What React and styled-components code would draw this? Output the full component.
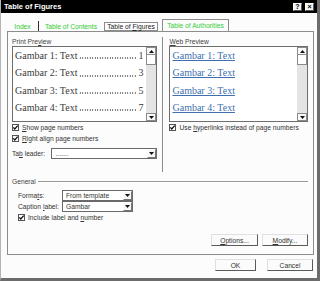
import React from "react";
import styled, { createGlobalStyle } from "styled-components";

const GlobalStyle = createGlobalStyle`
  html, body { margin: 0; padding: 0; background: #ffffff; }
  * { box-sizing: border-box; }
  body {
    font-family: "Liberation Sans", Arial, sans-serif;
    font-size: 6.7px;
    color: #333333;
  }
`;

const rows = [
  { label: "Gambar 1: Text", page: 1 },
  { label: "Gambar 2: Text", page: 3 },
  { label: "Gambar 3: Text", page: 5 },
  { label: "Gambar 4: Text", page: 7 },
];

const Arrow = ({ down }) => (
  <svg width="5" height="3" viewBox="0 0 5 3">
    <path d={down ? "M0 0 H5 L2.5 3 Z" : "M0 3 H5 L2.5 0 Z"} fill="#111" />
  </svg>
);

const Check = ({ label }) => (
  <CheckRow>
    <CheckBox>
      <svg width="7" height="7" viewBox="0 0 7 7">
        <path d="M1.3 3.4 L2.8 5 L5.7 1.6" stroke="#111" strokeWidth="1.3" fill="none" />
      </svg>
    </CheckBox>
    <span>{label}</span>
  </CheckRow>
);

const Select = ({ value, width }) => (
  <SelectBox $width={width}>
    <SelectValue>{value}</SelectValue>
    <SelectBtn>
      <Arrow down />
    </SelectBtn>
  </SelectBox>
);

const ScrollBar = () => (
  <Scroll>
    <ScrollBtn>
      <Arrow />
    </ScrollBtn>
    <Thumb />
    <Track />
    <ScrollBtn>
      <Arrow down />
    </ScrollBtn>
  </Scroll>
);

const App = () => {
  return (
    <>
      <GlobalStyle />
      <Window>
        <TitleBar>
          <Title>Table of Figures</Title>
          <TitleButtons>
            <TitleBtn>?</TitleBtn>
            <TitleBtn>×</TitleBtn>
          </TitleButtons>
        </TitleBar>
        <Body>
          <Tabs>
            <Tab $width={32} $sep>Index</Tab>
            <Tab $width={64}>Table of Contents</Tab>
            <ActiveTab>
              <span>
                Table of <U>F</U>igures
              </span>
            </ActiveTab>
            <BoxTab>Table of Authorities</BoxTab>
          </Tabs>
          <Panel>
            <Top>
              <Column $width={146}>
                <Label>
                  Print Pre<U>v</U>iew
                </Label>
                <Preview>
                  <PreviewList>
                    {rows.map((r) => (
                      <PrintRow key={r.label}>
                        <span>{r.label}</span>
                        <Leader />
                        <Page>{r.page}</Page>
                      </PrintRow>
                    ))}
                  </PreviewList>
                  <ScrollBar />
                </Preview>
                <Check
                  label={
                    <>
                      <U>S</U>how page numbers
                    </>
                  }
                />
                <Check
                  label={
                    <>
                      <U>R</U>ight align page numbers
                    </>
                  }
                />
                <LeaderRow>
                  <span>
                    Ta<U>b</U> leader:
                  </span>
                  <Select value="......." width={106} />
                </LeaderRow>
              </Column>
              <Separator />
              <Column $width={139}>
                <Label>
                  <U>W</U>eb Preview
                </Label>
                <Preview>
                  <PreviewList>
                    {rows.map((r) => (
                      <WebRow key={r.label}>
                        <Link>{r.label}</Link>
                      </WebRow>
                    ))}
                  </PreviewList>
                  <ScrollBar />
                </Preview>
                <Check
                  label={
                    <>
                      Use <U>h</U>yperlinks instead of page numbers
                    </>
                  }
                />
              </Column>
            </Top>
            <GroupHead>
              <span>General</span>
              <Rule />
            </GroupHead>
            <General>
              <FieldRow>
                <FieldLabel>
                  Forma<U>t</U>s:
                </FieldLabel>
                <Select value="From template" width={71} />
              </FieldRow>
              <FieldRow>
                <FieldLabel>
                  Caption <U>l</U>abel:
                </FieldLabel>
                <Select value="Gambar" width={71} />
              </FieldRow>
              <Check
                label={
                  <>
                    Include label and <U>n</U>umber
                  </>
                }
              />
            </General>
            <ButtonRow>
              <Button $width={47}>
                <span>
                  <U>O</U>ptions...
                </span>
              </Button>
              <Button $width={46}>
                <span>
                  <U>M</U>odify...
                </span>
              </Button>
            </ButtonRow>
          </Panel>
          <Footer>
            <Button $width={41}>OK</Button>
            <Button $width={46}>Cancel</Button>
          </Footer>
        </Body>
      </Window>
    </>
  );
};

export default App;

const Window = styled.div`
  width: 320px;
  height: 281px;
  display: flex;
  flex-direction: column;
  background: #fcfcfc;
  border-left: 1px solid #b4b4b4;
  border-right: 3px solid #6c6c6c;
  border-bottom: 3px solid #6c6c6c;
`;

const TitleBar = styled.div`
  height: 13px;
  background: #000000;
  display: flex;
  align-items: center;
  justify-content: space-between;
  padding: 0 3px 0 3px;
`;

const Title = styled.div`
  color: #ffffff;
  font-weight: 700;
  font-size: 7.5px;
`;

const TitleButtons = styled.div`
  display: flex;
  gap: 3px;
`;

const TitleBtn = styled.div`
  width: 9px;
  height: 8px;
  background: #f4f4f4;
  border-top: 1px solid #ffffff;
  border-left: 1px solid #ffffff;
  border-right: 1px solid #555;
  border-bottom: 1px solid #555;
  color: #000;
  font-weight: 700;
  font-size: 7px;
  line-height: 6px;
  text-align: center;
`;

const Body = styled.div`
  flex: 1;
  display: flex;
  flex-direction: column;
  padding: 6px 3px 0 6px;
`;

const Tabs = styled.div`
  height: 12px;
  display: flex;
  align-items: stretch;
`;

const Tab = styled.div`
  width: ${(p) => p.$width}px;
  display: flex;
  align-items: center;
  justify-content: center;
  color: #33cc33;
  border-right: ${(p) => (p.$sep ? "1px solid #333" : "none")};
  margin-top: 2px;
`;

const ActiveTab = styled.div`
  width: 54px;
  display: flex;
  align-items: center;
  justify-content: center;
  background: #ffffff;
  color: #222;
  border: 1px solid #8c8c8c;
  margin: 3px 0 0 1px;
  white-space: nowrap;
`;

const BoxTab = styled.div`
  width: 67px;
  margin-left: 4px;
  display: flex;
  align-items: center;
  justify-content: center;
  color: #33cc33;
  border: 1px solid #8c8c8c;
  border-bottom: none;
`;

const Panel = styled.div`
  height: 224px;
  display: flex;
  flex-direction: column;
  border: 1px solid #8c8c8c;
  background: #fcfcfc;
  padding: 5px 5px 0 4px;
`;

const Top = styled.div`
  height: 135px;
  display: flex;
`;

const Column = styled.div`
  width: ${(p) => p.$width}px;
  display: flex;
  flex-direction: column;
`;

const Separator = styled.div`
  width: 2px;
  margin: 0 5px 0 5px;
  border-left: 1px solid #8c8c8c;
  border-right: 1px solid #ffffff;
`;

const Label = styled.div`
  height: 9px;
  line-height: 9px;
  color: #444;
`;

const U = styled.span`
  text-decoration: underline;
`;

const Preview = styled.div`
  height: 76px;
  display: flex;
  border: 1px solid #6e6e6e;
  background: #ffffff;
`;

const PreviewList = styled.div`
  flex: 1;
  min-width: 0;
  padding: 0 3px 0 2px;
  font-family: "Liberation Serif", "Times New Roman", serif;
  font-size: 10px;
`;

const PrintRow = styled.div`
  height: 17.3px;
  line-height: 17.3px;
  display: flex;
  color: #3a3a3a;
  white-space: nowrap;
`;

const Leader = styled.span`
  flex: 1;
  margin: 0 1px 5px 2px;
  background-image: radial-gradient(circle, #555 0.55px, transparent 0.9px);
  background-size: 2.5px 2px;
  background-repeat: repeat-x;
  background-position: left bottom;
`;

const Page = styled.span`
  flex: none;
`;

const WebRow = styled.div`
  height: 17.3px;
  line-height: 17.3px;
`;

const Link = styled.span`
  color: #3f6fae;
  text-decoration: underline;
`;

const Scroll = styled.div`
  width: 10px;
  display: flex;
  flex-direction: column;
  background: #e4e4e4;
`;

const ScrollBtn = styled.div`
  height: 8px;
  display: flex;
  align-items: center;
  justify-content: center;
  background: #f8f8f8;
  border: 1px solid #8a8a8a;
`;

const Thumb = styled.div`
  height: 10px;
  background: #ffffff;
  border: 1px solid #8a8a8a;
  border-top: none;
`;

const Track = styled.div`
  flex: 1;
`;

const CheckRow = styled.div`
  height: 11px;
  display: flex;
  align-items: center;
  gap: 3px;
  color: #333;
  white-space: nowrap;
`;

const CheckBox = styled.div`
  width: 7px;
  height: 7px;
  border: 1px solid #555;
  background: #ffffff;
  display: flex;
  align-items: center;
  justify-content: center;
  svg {
    flex: none;
  }
`;

const LeaderRow = styled.div`
  margin-top: 3px;
  height: 12px;
  display: flex;
  align-items: center;
  justify-content: space-between;
`;

const SelectBox = styled.div`
  width: ${(p) => p.$width}px;
  height: 11px;
  display: flex;
  border: 1px solid #6a6a6a;
  background: #ffffff;
`;

const SelectValue = styled.div`
  flex: 1;
  padding-left: 3px;
  line-height: 9px;
  color: #333;
`;

const SelectBtn = styled.div`
  width: 9px;
  display: flex;
  align-items: center;
  justify-content: center;
  background: #f6f6f6;
  border-left: 1px solid #fff;
  border-top: 1px solid #fff;
  border-right: 1px solid #777;
  border-bottom: 1px solid #777;
`;

const GroupHead = styled.div`
  margin-top: 5px;
  height: 9px;
  display: flex;
  align-items: center;
  gap: 2px;
  color: #444;
`;

const Rule = styled.div`
  flex: 1;
  border-top: 1px solid #9a9a9a;
  border-bottom: 1px solid #ffffff;
`;

const General = styled.div`
  padding: 4px 0 0 6px;
  display: flex;
  flex-direction: column;
`;

const FieldRow = styled.div`
  height: 11px;
  display: flex;
  align-items: center;
`;

const FieldLabel = styled.div`
  width: 44px;
  color: #333;
`;

const ButtonRow = styled.div`
  margin-top: 11px;
  display: flex;
  justify-content: flex-end;
  gap: 4px;
`;

const Button = styled.div`
  width: ${(p) => p.$width}px;
  height: 12px;
  display: flex;
  align-items: center;
  justify-content: center;
  background: #fbfbfb;
  border-top: 1px solid #e0e0e0;
  border-left: 1px solid #e0e0e0;
  border-right: 1px solid #5a5a5a;
  border-bottom: 1px solid #5a5a5a;
  color: #333;
`;

const Footer = styled.div`
  margin-top: 4px;
  display: flex;
  justify-content: flex-end;
  gap: 11px;
  padding-right: 1px;
`;
